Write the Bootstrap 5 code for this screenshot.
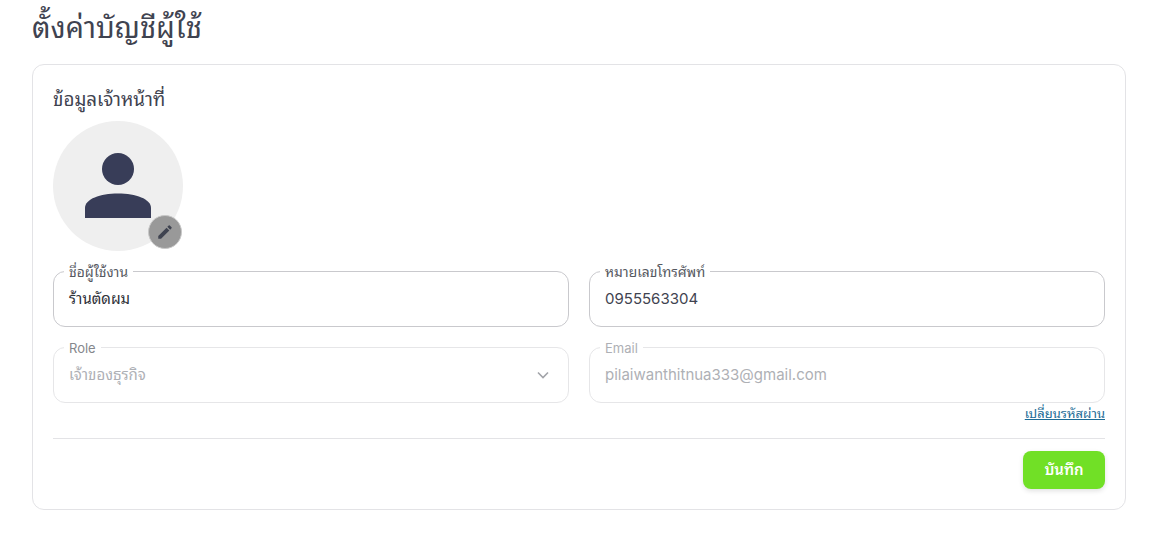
<!DOCTYPE html>
<html lang="th">
<head>
<meta charset="utf-8">
<title>ตั้งค่าบัญชีผู้ใช้</title>
<link href="https://cdn.jsdelivr.net/npm/bootstrap@5.3.0/dist/css/bootstrap.min.css" rel="stylesheet">
<style>
body{font-family:Inter,Tahoma,"Noto Sans Thai Looped","Noto Serif Thai",Garuda,Loma,Waree,"DejaVu Sans",sans-serif;color:#3f4350;background:#fff;overflow:hidden}
.page-wrap{padding:10px 38px 0 32px}
.page-title{font-size:29px;font-weight:400;line-height:36px;margin:0 0 18px;color:#3f4350}
.panel-box{border:1px solid #e3e3e6;border-radius:12px;padding:20px;height:446px}
.panel-title{font-size:18.800px;font-weight:400;line-height:30px;margin:0 0 6px;color:#3f4350}
.avatar-wrap{position:relative;width:130px;height:130px;background:#efefef;border-radius:50%}
.avatar-wrap>svg{display:block}
.edit-badge{position:absolute;right:1px;bottom:2px;width:34px;height:34px;border-radius:50%;background:#999;border:1px solid #c8c8c8;display:flex;align-items:center;justify-content:center;padding:0}
.form-grid{display:grid;grid-template-columns:516px 516px;column-gap:20px;row-gap:20px;margin-top:20px}
.field-set{border:1px solid #c9c9cd;border-radius:12px;height:61px;padding:0 15px;margin:-5px 0 0;position:relative;display:block;min-width:0}
.field-set legend{float:none;width:auto;font-size:13px;line-height:12px;height:10px;padding:0 5px;margin:0 0 0 -5px;color:#55585f}
.field-set legend.label-thai{font-size:13.800px}
.field-val{font-size:15px;line-height:24px;margin-top:11px;color:#3f4350}
.field-val.val-strong{color:#2e3138}
.field-off{border-color:#e6e6e8}
.field-off legend,.field-off .field-val{color:#aeb0b5}
.field-set.field-off legend.label-mid{color:#85878c}
.chev{position:absolute;right:18px;top:16px}
.pass-link{font-size:13px;line-height:16px;color:#1d6c96;text-decoration:underline;display:block;text-align:right;margin-top:2px}
.divider{border:0;border-top:1px solid #e3e3e6;opacity:1;margin:17px 0 12px}
.save-btn{background:#71e026;border:0;color:#fff;font-size:15px;font-weight:600;width:82px;height:38px;border-radius:8px;box-shadow:0 2px 5px rgba(0,0,0,.12)}
</style>
</head>
<body>
<div class="page-wrap">
  <h1 class="page-title">ตั้งค่าบัญชีผู้ใช้</h1>
  <div class="panel-box">
    <h2 class="panel-title">ข้อมูลเจ้าหน้าที่</h2>
    <div class="avatar-wrap">
      <svg width="130" height="130" viewBox="0 0 130 130" aria-hidden="true"><circle cx="65" cy="48" r="16" fill="#383d58"/><path d="M32 97V87c0-9 15-14.500 33-14.500S98 78 98 87v10z" fill="#383d58"/></svg>
      <button type="button" class="edit-badge" aria-label="แก้ไข"><svg width="18" height="18" viewBox="0 0 24 24" aria-hidden="true"><path d="M3 17.250V21h3.750L17.810 9.940l-3.750-3.750L3 17.250zM20.710 7.040a1 1 0 0 0 0-1.410l-2.340-2.340a1 1 0 0 0-1.410 0l-1.830 1.830 3.750 3.750 1.830-1.830z" fill="#3f4350"/></svg></button>
    </div>
    <div class="form-grid">
      <fieldset class="field-set"><legend class="label-thai">ชื่อผู้ใช้งาน</legend><div class="field-val val-strong">ร้านตัดผม</div></fieldset>
      <fieldset class="field-set"><legend class="label-thai">หมายเลขโทรศัพท์</legend><div class="field-val">0955563304</div></fieldset>
      <fieldset class="field-set field-off"><legend class="label-mid">Role</legend><div class="field-val">เจ้าของธุรกิจ</div>
        <svg class="chev" width="14" height="14" viewBox="0 0 14 14" aria-hidden="true"><path d="M2 4.500l5 5 5-5" fill="none" stroke="#a2a4a9" stroke-width="1.600"/></svg></fieldset>
      <fieldset class="field-set field-off"><legend>Email</legend><div class="field-val">pilaiwanthitnua333@gmail.com</div></fieldset>
    </div>
    <a href="#" class="pass-link">เปลี่ยนรหัสผ่าน</a>
    <hr class="divider">
    <div class="d-flex justify-content-end"><button type="button" class="save-btn">บันทึก</button></div>
  </div>
</div>
<script src="https://cdn.jsdelivr.net/npm/bootstrap@5.3.0/dist/js/bootstrap.bundle.min.js"></script>
</body>
</html>
